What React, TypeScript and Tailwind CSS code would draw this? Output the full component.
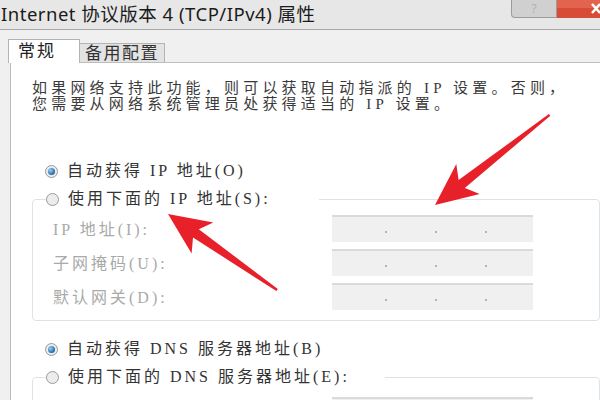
import type { ReactNode } from 'react';

const cjk = '"Liberation Serif", "Noto Sans CJK SC", serif';

function Radio({ checked }: { checked?: boolean }) {
  return (
    <span className="flex h-[13px] w-[13px] flex-shrink-0 items-center justify-center rounded-full border border-[#9a9a9a] bg-[#ececec]">
      {checked && (
        <span className="h-[7px] w-[7px] rounded-full bg-[radial-gradient(circle_at_35%_35%,#8fd0f8,#1f5f9e_75%)]" />
      )}
    </span>
  );
}

function RadioRow({ checked, children }: { checked?: boolean; children: ReactNode }) {
  return (
    <div className="flex h-[28px] items-center gap-[9px] text-[16px] tracking-[3px] text-[#333]">
      <Radio checked={checked} />
      <span>{children}</span>
    </div>
  );
}

function IpBox() {
  return (
    <div className="flex h-[27px] w-[201px] items-center border-t-2 border-[#dadada] bg-[#f0f0f0] pl-[5px]">
      {[0, 1, 2].map((i) => (
        <div key={i} className="flex w-[50px] justify-end pt-[5px]">
          <span className="h-[2px] w-[2px] rounded-full bg-[#a0a0a0]" />
        </div>
      ))}
    </div>
  );
}

function Field({ label }: { label: string }) {
  return (
    <div className="flex h-[27px] items-center">
      <span className="w-[279px] pt-[3px] text-[16px] tracking-[3px] text-[#a9a9a9]">{label}</span>
      <IpBox />
    </div>
  );
}

export default function App() {
  return (
    <div className="relative h-[400px] w-[600px] overflow-hidden bg-[#f0f0f0]">
      {/* title bar */}
      <div className="flex h-[30px] items-start border-b border-[#a9a9a9] bg-[#e7e7e7]">
        <div
          className="flex-1 pl-[1px] pt-[3px] text-[18.5px] leading-[22px] tracking-[0.5px] text-[#1b1b1b]"
          style={{ fontFamily: '"Noto Sans", "Noto Sans CJK SC", sans-serif' }}
        >
          Internet 协议版本 4 (TCP/IPv4) 属性
        </div>
        <div className="flex h-[18px] w-[46px] items-center justify-center rounded-bl-[4px] border border-t-0 border-[#9b9b9b] bg-[#d0d0d0] text-[12px] leading-none text-[#b0b0b0]">
          ?
        </div>
        <svg width="43" height="18" viewBox="0 0 43 18" className="block flex-shrink-0">
          <rect x="0" y="0" width="43" height="18" fill="#d84b36" />
          <rect x="0" y="0" width="43" height="8" fill="#e2644f" />
          <path d="M35 4 L43 13 M43 4 L35 13" stroke="#ffffff" strokeWidth="2.5" />
        </svg>
      </div>

      {/* tabs */}
      <div className="flex h-[32px] items-end pl-[8px]" style={{ fontFamily: cjk }}>
        <div className="relative z-10 -mb-px h-[24px] w-[72px] border border-b-0 border-[#b4b4b4] bg-white pl-[9px] pt-[2px] text-[17px] leading-[20px] tracking-[2px] text-[#222]">
          常规
        </div>
        <div className="h-[19px] w-[85px] border border-b-0 border-l-0 border-[#b4b4b4] bg-[#e3e3e3] pl-[5px] pt-[1px] text-[17px] leading-[18px] tracking-[1.5px] text-[#333]">
          备用配置
        </div>
      </div>

      {/* panel */}
      <div className="ml-[10px] h-[400px] border-l border-t border-[#bdbdbd] bg-white pl-[21px]" style={{ fontFamily: cjk }}>
        <p className="pt-[17px] text-[15px] leading-[16px] tracking-[4.2px] text-[#3a3a3a]">
          如果网络支持此功能，则可以获取自动指派的 IP 设置。否则，
          <br />
          您需要从网络系统管理员处获得适当的 IP 设置。
        </p>

        <div className="mt-[45px] pl-[13px]">
          <RadioRow checked>自动获得 IP 地址(O)</RadioRow>
        </div>

        <fieldset className="rounded-[4px] border border-[#dfe2e5] pb-[10px]">
          <legend className="ml-[13px] pr-[48px]">
            <RadioRow>使用下面的 IP 地址(S):</RadioRow>
          </legend>
          <div className="mt-[2px] flex flex-col gap-[7px] pl-[20px]">
            <Field label="IP 地址(I):" />
            <Field label="子网掩码(U):" />
            <Field label="默认网关(D):" />
          </div>
        </fieldset>

        <div className="mt-[14px] pl-[13px]">
          <RadioRow checked>自动获得 DNS 服务器地址(B)</RadioRow>
        </div>

        <fieldset className="rounded-[4px] border border-[#dfe2e5]">
          <legend className="ml-[13px] pr-[35px]">
            <RadioRow>使用下面的 DNS 服务器地址(E):</RadioRow>
          </legend>
          <div className="mt-[6px] flex flex-col gap-[7px] pl-[20px]">
            <Field label="首选 DNS 服务器(P):" />
          </div>
        </fieldset>
      </div>

      {/* annotation arrows */}
      <svg className="pointer-events-none absolute inset-0" width="600" height="400" viewBox="0 0 600 400">
        <polygon
          fill="#e8202a"
          points="435,205 479.7,193.9 464.8,187.9 550.3,115.7 548.9,113.9 458.6,180.1 456.3,164.1"
        />
        <polygon
          fill="#e8202a"
          points="168,214 213.3,222.4 198.8,229.3 277.8,289 276.4,291 193,237.5 191.6,253.6"
        />
      </svg>
    </div>
  );
}
